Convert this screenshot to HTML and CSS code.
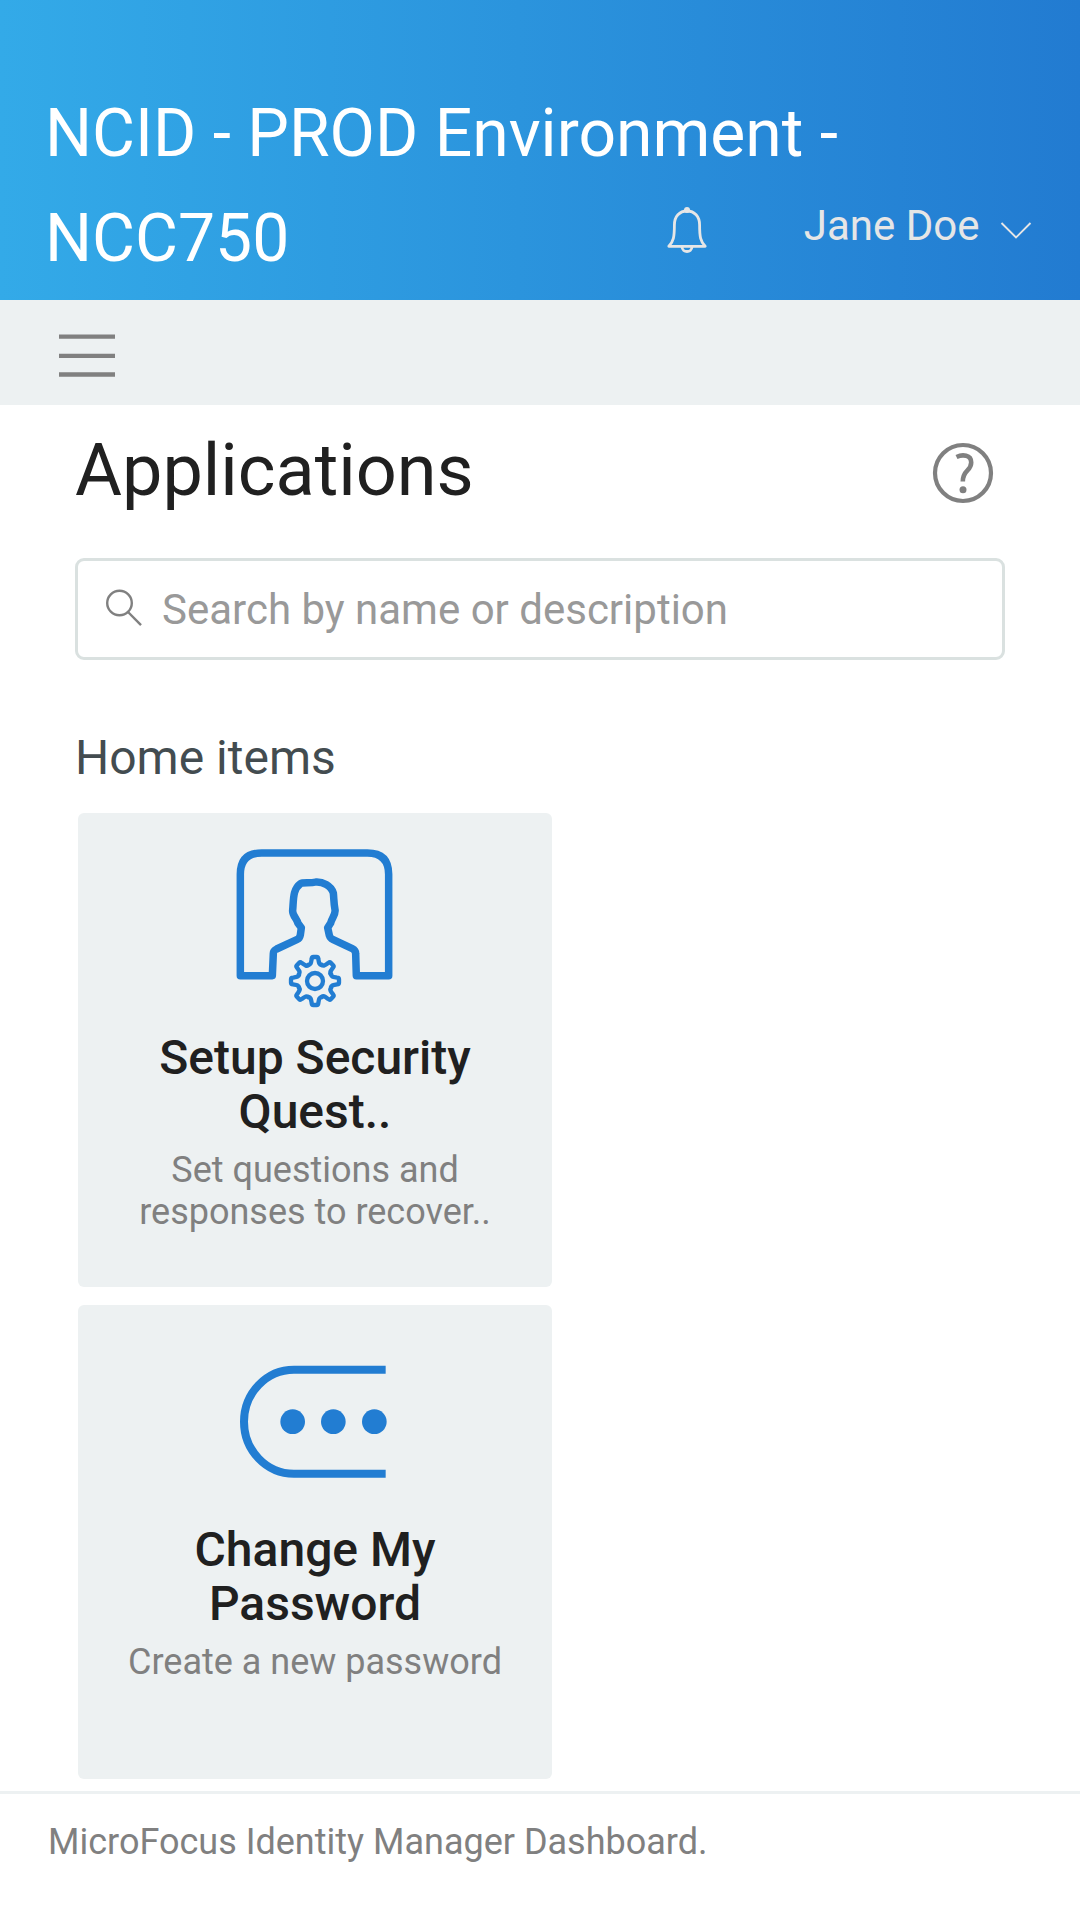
FILE: index.html
```html
<!DOCTYPE html>
<html lang="en">
<head>
<meta charset="utf-8">
<title>Identity Manager Dashboard</title>
<link rel="stylesheet" href="styles.css">
</head>
<body>
<header class="header">
  <h1 class="brand">NCID - PROD Environment - NCC750</h1>
  <div class="tools">
    <svg class="bell" viewBox="0 0 42 48" fill="none" stroke="#e6e6e6" stroke-width="2.8">
      <path d="M2.800 40.300C7.500 35.500 8.400 31 8.400 19C8.400 10.500 13.500 5 21 5S33.600 10.500 33.600 19C33.600 31 34.500 35.500 39.200 40.300Z" stroke-linejoin="round"/>
      <path d="M16 41C16.500 47 25.500 47 26 41"/>
      <circle cx="21" cy="4" r="3" fill="#e6e6e6" stroke="none"/>
    </svg>
    <span class="user">Jane Doe</span>
    <svg class="chevron" viewBox="0 0 32 20" fill="none" stroke="#e6e6e6" stroke-width="1.900"><path d="M1.500 2L16 16.500L30.500 2"/></svg>
  </div>
</header>
<nav class="navbar">
  <svg class="menu" viewBox="0 0 56 44" stroke="#808080" stroke-width="4.300"><path d="M0 2.700H56M0 21.800H56M0 40.500H56"/></svg>
</nav>
<main class="content">
  <div class="heading">
    <h2 class="title">Applications</h2>
    <svg class="help" viewBox="0 0 62 62" fill="none" stroke="#808080">
      <circle cx="31" cy="31" r="28" stroke-width="4.200"/>
      <path d="M24.500 15C30.500 12.200 39.200 12.800 39.200 20.500C39.200 29.500 30.800 27.500 30.800 39.500" stroke-width="4.600"/>
      <circle cx="31" cy="47.800" r="3.500" fill="#808080" stroke="none"/>
    </svg>
  </div>
  <label class="search">
    <svg class="lens" viewBox="0 0 38 38" fill="none" stroke="#808080" stroke-width="2.400"><circle cx="14.500" cy="14" r="12.300"/><path d="M23 23L36 36.200"/></svg>
    <input class="field" type="text" placeholder="Search by name or description">
  </label>
  <h3 class="section">Home items</h3>
  <div class="cards">
    <article class="card">
      <svg class="art" viewBox="0 0 570 570" fill="none" stroke="#227dd2">
        <path d="M157 437L160 370Q160 362 170 357L232 328Q239 325 241 315L244 293L234 280C231 267 216 255 218 241C221 208 218 178 241 161C250 156 270 161 288 156C307 155 333 166 340 189C342 207 341 219 345 239C348 253 335 264 332 279L323 293L328 316Q331 325 338 328L397 356Q407 361 407 371L409 437H506V133Q506 69 442 69H125Q61 69 61 133V437Z" stroke-width="22.500" stroke-linejoin="round"/>
        <g stroke-width="13" stroke-linecap="round" stroke-linejoin="round">
          <g id="tooth"><path d="M265.500 404C273 404 273 398 275 387Q275.500 381 280 381H290Q294.500 381 295 387C297 398 297 404 304.500 405.500"/></g>
          <use href="#tooth" transform="rotate(45 285 453)"/>
          <use href="#tooth" transform="rotate(90 285 453)"/>
          <use href="#tooth" transform="rotate(135 285 453)"/>
          <use href="#tooth" transform="rotate(180 285 453)"/>
          <use href="#tooth" transform="rotate(225 285 453)"/>
          <use href="#tooth" transform="rotate(270 285 453)"/>
          <use href="#tooth" transform="rotate(315 285 453)"/>
          <circle cx="285" cy="453" r="24"/>
        </g>
      </svg>
      <h4 class="name">Setup Security Quest..</h4>
      <p class="text">Set questions and responses to recover..</p>
    </article>
    <article class="card">
      <svg class="art" viewBox="0 -54 570 570">
        <path d="M497 89H222C139 89 72 159 72 245S139 401 222 401H497" fill="none" stroke="#227dd2" stroke-width="24"/>
        <g fill="#227dd2"><circle cx="218" cy="245" r="37"/><circle cx="340" cy="245" r="37"/><circle cx="463" cy="245" r="37"/></g>
      </svg>
      <h4 class="name">Change My Password</h4>
      <p class="text">Create a new password</p>
    </article>
  </div>
</main>
<footer class="footer">MicroFocus Identity Manager Dashboard.</footer>
</body>
</html>
```
FILE: styles.css
```css
* { box-sizing: border-box; }
body {
  margin: 0;
  height: 1920px;
  display: flex;
  flex-direction: column;
  background: #fff;
  color: #202020;
  font-family: Roboto, "Liberation Sans", sans-serif;
}
h1, h2, h3, h4, p { margin: 0; font-weight: 400; }
svg { display: block; flex: none; }
.header {
  height: 300px;
  padding: 81px 48px 9px 45px;
  display: grid;
  background: linear-gradient(90deg, #33aae8 0%, #2b94dd 48%, #227bd1 100%);
}
.brand {
  grid-area: 1 / 1;
  color: #fff;
  font-size: 66px;
  line-height: 105px;
}
.tools {
  grid-area: 1 / 1;
  justify-self: end;
  align-self: end;
  display: flex;
  align-items: flex-start;
  height: 90px;
}
.bell { width: 42px; height: 48px; margin-top: 5px; }
.user {
  margin: 0 20.5px 0 96px;
  color: #e6e6e6;
  font-size: 42px;
  line-height: 49px;
}
.chevron { width: 32px; height: 20px; margin-top: 20px; }
.navbar { height: 105px; padding: 34px 59px 0; background: #edf1f2; }
.menu { width: 56px; height: 44px; }
.content { flex: 1; padding: 23px 75px 0; }
.heading {
  display: flex;
  justify-content: space-between;
  height: 130px;
  padding-right: 11px;
}
.title { font-size: 72px; line-height: 85px; }
.help { width: 62px; height: 62px; margin-top: 14px; }
.search {
  display: flex;
  align-items: center;
  width: 930px;
  height: 102px;
  padding: 1px 26px 0;
  border: 3px solid #dae1e0;
  border-radius: 9px;
}
.lens { width: 38px; height: 38px; margin: -4px 19px 0 1px; }
.field {
  flex: 1;
  padding: 0;
  border: 0;
  outline: 0;
  background: none;
  font: 42px/49px Roboto, "Liberation Sans", sans-serif;
}
.field::placeholder { color: #999; opacity: 1; }
.section {
  margin-top: 69px;
  color: #434c50;
  font-size: 48px;
  line-height: 57px;
}
.cards {
  display: flex;
  flex-direction: column;
  gap: 18px;
  margin: 27px 3px 0;
}
.card {
  width: 474px;
  height: 474px;
  padding: 17px 45px 0;
  display: flex;
  flex-direction: column;
  align-items: center;
  border-radius: 6px;
  background: #edf1f2;
  text-align: center;
}
.art { width: 190px; height: 190px; margin-bottom: 10.5px; }
.name { font-size: 48px; font-weight: 500; line-height: 54px; }
.text { margin-top: 10.5px; color: #808080; font-size: 36px; line-height: 42px; }
.footer {
  height: 129px;
  padding: 27px 48px 0;
  border-top: 3px solid #edf1f2;
  color: #808080;
  font-size: 36px;
  line-height: 42px;
}
```
